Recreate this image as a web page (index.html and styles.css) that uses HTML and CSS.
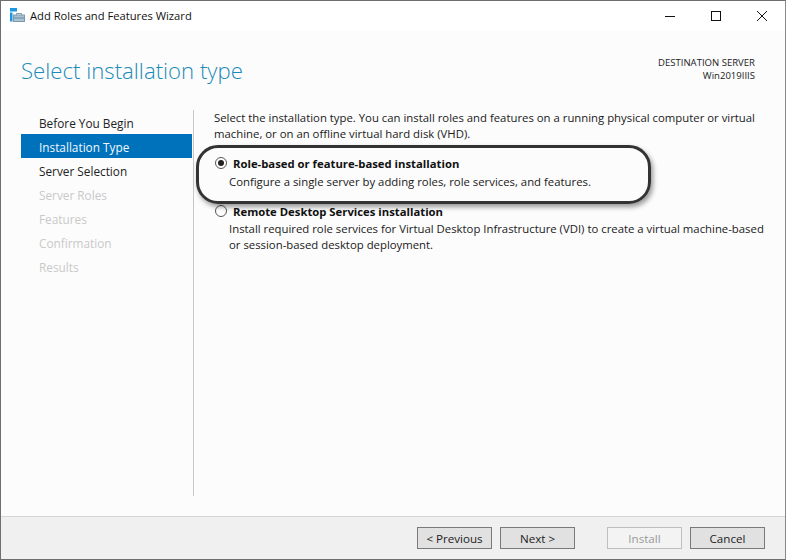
FILE: index.html
```html
<!DOCTYPE html>
<html lang="en">
<head>
<meta charset="utf-8">
<title>Add Roles and Features Wizard</title>
<link rel="stylesheet" href="styles.css">
</head>
<body>
<div class="window">
  <header class="titlebar">
    <svg class="app-icon" width="16" height="16" viewBox="0 0 16 16">
      <rect x="0" y="0" width="7" height="3.5" fill="#1b96e0"/>
      <rect x="0" y="4.5" width="2.5" height="9" fill="#1b96e0"/>
      <path d="M6.5 7V5.5h5V7" fill="none" stroke="#7d99ad"/>
      <rect x="3.5" y="7" width="11" height="6.5" fill="#a9c2d3" stroke="#7d99ad"/>
      <rect x="4" y="9.5" width="10" height="1" fill="#6f8da3"/>
    </svg>
    <span class="title-text">Add Roles and Features Wizard</span>
    <div class="controls">
      <svg class="ctl" width="46" height="30" viewBox="0 0 46 30"><path d="M18 15.5h10" stroke="#111" fill="none"/></svg>
      <svg class="ctl" width="46" height="30" viewBox="0 0 46 30"><rect x="18.5" y="10.5" width="9" height="9" stroke="#111" fill="none"/></svg>
      <svg class="ctl" width="46" height="30" viewBox="0 0 46 30"><path d="M18 10l10 10M28 10L18 20" stroke="#111" fill="none"/></svg>
    </div>
  </header>
  <div class="page-head">
    <h1 class="page-title">Select installation type</h1>
    <div class="dest"><div>DESTINATION SERVER</div><div>Win2019IIIS</div></div>
  </div>
  <div class="body">
    <nav class="steps">
      <div class="step">Before You Begin</div>
      <div class="step active">Installation Type</div>
      <div class="step">Server Selection</div>
      <div class="step off">Server Roles</div>
      <div class="step off">Features</div>
      <div class="step off">Confirmation</div>
      <div class="step off">Results</div>
    </nav>
    <main class="content">
      <p class="intro">Select the installation type. You can install roles and features on a running physical computer or virtual machine, or on an offline virtual hard disk (VHD).</p>
      <div class="option first">
        <div class="opt-head"><span class="radio checked"></span><span class="opt-title">Role-based or feature-based installation</span></div>
        <p class="opt-desc">Configure a single server by adding roles, role services, and features.</p>
      </div>
      <div class="option second">
        <div class="opt-head"><span class="radio"></span><span class="opt-title">Remote Desktop Services installation</span></div>
        <p class="opt-desc">Install required role services for Virtual Desktop Infrastructure (VDI) to create a virtual machine-based or session-based desktop deployment.</p>
      </div>
      <div class="callout"></div>
    </main>
  </div>
  <footer class="footer">
    <button class="btn">&lt; Previous</button>
    <button class="btn next">Next &gt;</button>
    <button class="btn install" disabled>Install</button>
    <button class="btn">Cancel</button>
  </footer>
</div>
</body>
</html>
```
FILE: styles.css
```css
* { box-sizing: border-box; }
html, body { margin: 0; padding: 0; }
body { width: 786px; height: 560px; overflow: hidden; background: #fff; font-family: "Open Sans", "Noto Sans", sans-serif; font-size: 11.35px; color: #1a1a1a; }
.window { width: 786px; height: 560px; display: flex; flex-direction: column; border: 1px solid #6e6e6e; border-right-color: #8a8a8a; background: #fcfcfc; }
.titlebar { height: 30px; flex: none; background: #fff; display: flex; align-items: center; padding-left: 9px; }
.app-icon { flex: none; }
.title-text { margin-left: 4px; font-size: 11.2px; color: #111; position: relative; top: -0.5px; }
.controls { margin-left: auto; display: flex; }
.ctl { display: block; }
.page-head { height: 73px; flex: none; display: flex; justify-content: space-between; padding: 0 30px 0 20px; }
.page-title { margin: 24px 0 0; font-weight: 300; font-size: 22.2px; line-height: 32px; color: #1b8bb8; }
.dest { margin-top: 25px; text-align: right; font-size: 9.55px; line-height: 13px; color: #222; }
.body { flex: 1; display: flex; min-height: 0; }
.steps { width: 173px; flex: none; margin: 6px 0 0 20px; height: 386px; border-right: 1px solid #c8c8c8; }
.step { height: 24px; line-height: 27px; padding-left: 18px; font-size: 11.8px; color: #222; width: 171px; }
.step.active { background: #0072bc; color: #f2f8fc; }
.step.off { color: #c9c9c9; }
.content { flex: 1; position: relative; padding: 6px 19px 0 20px; }
.intro { margin: 0; line-height: 16px; width: 560px; }
.option.first { margin-top: 13px; }
.option.second { margin-top: 13px; }
.opt-head { display: flex; align-items: center; height: 16px; }
.radio { width: 12px; height: 12px; border: 1px solid #555; border-radius: 50%; background: #fff; margin-left: 1px; position: relative; flex: none; }
.radio.checked::after { content: ""; position: absolute; left: 2px; top: 2px; width: 6px; height: 6px; background: #222; border-radius: 50%; }
.opt-title { margin-left: 6px; font-weight: 700; font-size: 11.3px; color: #111; }
.opt-desc { margin: 3px 0 0 15px; line-height: 16px; width: 540px; }
.second .opt-desc { margin-top: 2px; }
.callout { position: absolute; left: 2px; top: 41px; width: 455px; height: 59px; border: 3px solid #333; border-radius: 22px; box-shadow: 2px 3px 5px rgba(0,0,0,.4); }
.footer { height: 43px; flex: none; background: #f0f0f0; border-top: 1px solid #d5d5d5; display: flex; align-items: flex-start; padding: 10px 20px 0 416px; }
.btn { width: 75px; height: 22px; padding: 0; border: 1px solid #7a7a7a; background: #e1e1e1; font: 11.6px "Open Sans", sans-serif; color: #222; margin-right: 8px; }
.btn.next { margin-right: 32px; }
.btn.install { background: #f3f3f3; border-color: #bfbfbf; color: #9a9a9a; }
.btn:last-child { margin-right: 0; }
```
